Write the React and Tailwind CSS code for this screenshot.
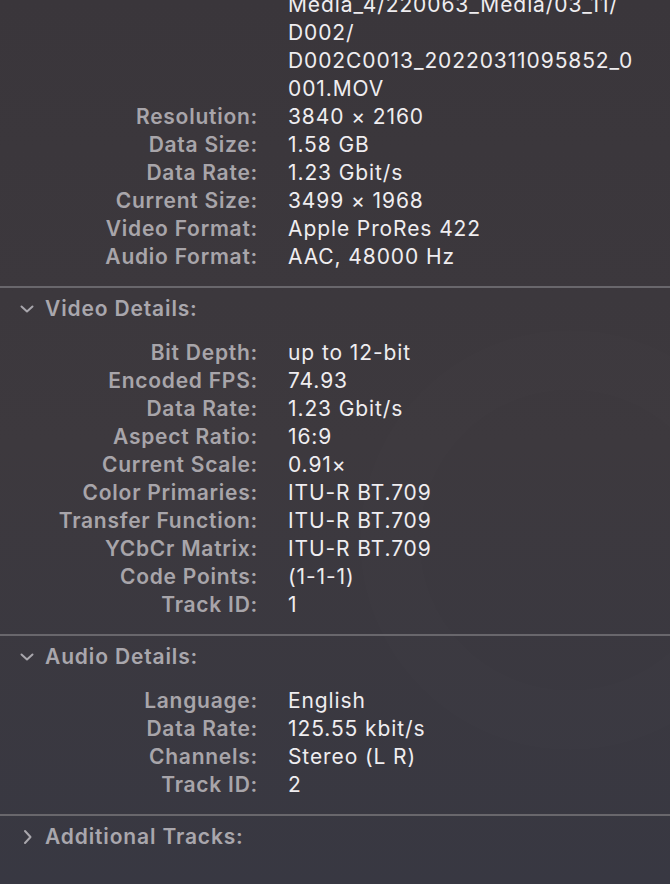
import React from "react";

const font = { fontFamily: "Inter, 'Noto Sans', 'Liberation Sans', sans-serif" };

const general = [
  ["Resolution:", "3840 × 2160"],
  ["Data Size:", "1.58 GB"],
  ["Data Rate:", "1.23 Gbit/s"],
  ["Current Size:", "3499 × 1968"],
  ["Video Format:", "Apple ProRes 422"],
  ["Audio Format:", "AAC, 48000 Hz"],
];

const video = [
  ["Bit Depth:", "up to 12-bit"],
  ["Encoded FPS:", "74.93"],
  ["Data Rate:", "1.23 Gbit/s"],
  ["Aspect Ratio:", "16:9"],
  ["Current Scale:", "0.91×"],
  ["Color Primaries:", "ITU-R BT.709"],
  ["Transfer Function:", "ITU-R BT.709"],
  ["YCbCr Matrix:", "ITU-R BT.709"],
  ["Code Points:", "(1-1-1)"],
  ["Track ID:", "1"],
];

const audio = [
  ["Language:", "English"],
  ["Data Rate:", "125.55 kbit/s"],
  ["Channels:", "Stereo (L R)"],
  ["Track ID:", "2"],
];

function Row({ label, children }) {
  return (
    <div className="grid grid-cols-[258px_1fr] gap-x-[30px] text-[21px] leading-[28px]">
      <div className="text-right font-semibold text-[#a8a5aa] tracking-[0.75px]">{label}</div>
      <div className="text-[#efedf0] tracking-[0.9px] whitespace-nowrap">{children}</div>
    </div>
  );
}

function Rows({ items }) {
  return items.map(([l, v], i) => (
    <Row key={i} label={l}>
      {v}
    </Row>
  ));
}

function Divider({ className }) {
  return <div className={"h-[2px] w-full bg-[#69676c] " + className} />;
}

function Header({ title, open }) {
  return (
    <div className="flex items-center h-[28px] pl-[20px] text-[21px] font-semibold text-[#a9a7ad] tracking-[0.85px]">
      <span className="w-[25px] flex items-center">
        {open ? (
          <svg width="14" height="10" viewBox="0 0 14 10">
            <path d="M1.5 2.5 L7 7.5 L12.5 2.5" fill="none" stroke="#a9a7ad" strokeWidth="2" strokeLinecap="round" strokeLinejoin="round" />
          </svg>
        ) : (
          <svg width="14" height="16" viewBox="0 0 14 16">
            <path d="M5 2 L10.5 8 L5 14" fill="none" stroke="#a9a7ad" strokeWidth="2" strokeLinecap="round" strokeLinejoin="round" />
          </svg>
        )}
      </span>
      <span>{title}</span>
    </div>
  );
}

export default function App() {
  return (
    <div
      className="relative w-full h-[884px] overflow-hidden bg-gradient-to-b from-[#3a363b] via-[#3d393e] to-[#383842]"
      style={font}
    >
      {/* faint watermark behind the panel */}
      <div className="absolute left-[360px] top-[330px] w-[420px] h-[420px] rounded-full border-[60px] border-[#ffffff] opacity-[0.008]" />

      <div className="relative">
        <div className="-mt-[9px]">
          <Row label="">
            <div>Media_4/220063_Media/03_11/</div>
            <div>D002/</div>
            <div>D002C0013_20220311095852_0</div>
            <div>001.MOV</div>
          </Row>
          <Rows items={general} />
        </div>

        <Divider className="mt-[15px]" />
        <div className="mt-[7px]">
          <Header title="Video Details:" open />
        </div>
        <div className="mt-[16px]">
          <Rows items={video} />
        </div>

        <Divider className="mt-[15px]" />
        <div className="mt-[7px]">
          <Header title="Audio Details:" open />
        </div>
        <div className="mt-[16px]">
          <Rows items={audio} />
        </div>

        <Divider className="mt-[15px]" />
        <div className="mt-[7px]">
          <Header title="Additional Tracks:" />
        </div>
      </div>
    </div>
  );
}
